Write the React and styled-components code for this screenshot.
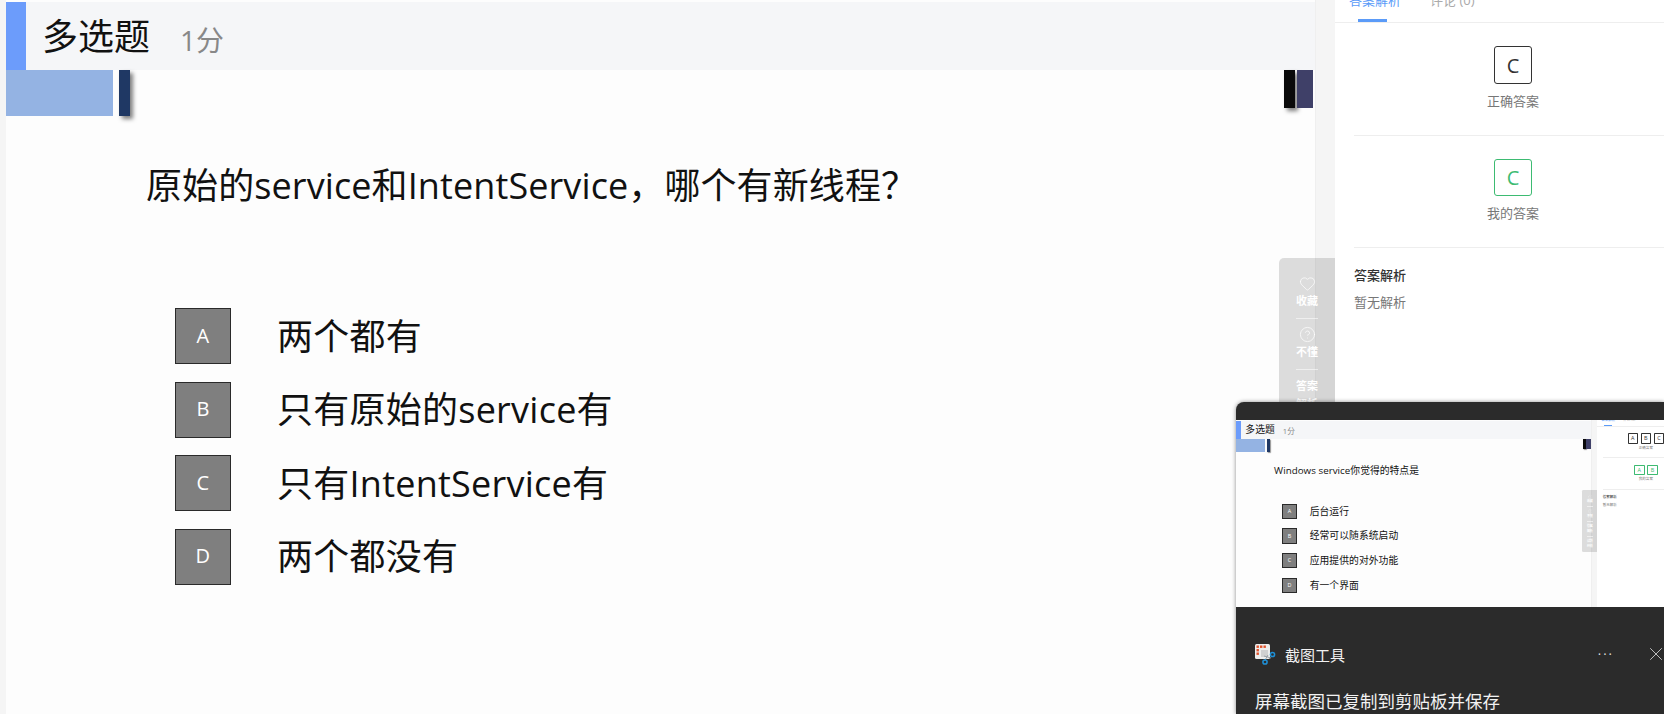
import React from "react";
import styled, { createGlobalStyle } from "styled-components";
import { Heart, CircleHelp, X } from "lucide-react";

const GlobalStyle = createGlobalStyle`
  html, body {
    margin: 0;
    padding: 0;
    overflow: hidden;
    background: #f5f5f5;
    font-family: "Open Sans", "Noto Sans CJK SC", sans-serif;
  }
`;

const Viewport = styled.div`
  position: relative;
  width: 1664px;
  height: 714px;
  overflow: hidden;
`;

const Screen = styled.div`
  position: relative;
  display: flex;
  flex: none;
  width: 1664px;
  height: 714px;
  padding-left: 6px;
  box-sizing: border-box;
  overflow: hidden;
  background: #f5f5f5;
`;

const Slide = styled.main`
  flex: none;
  width: 1310px;
  height: 100%;
  padding-top: 2px;
  box-sizing: border-box;
  background: #fdfdfd;
  border-right: 1px solid #efefef;
`;

const HeaderBar = styled.header`
  display: flex;
  align-items: center;
  height: 68px;
  background: #f5f6f8;
  border-left: 20px solid #6c9cfb;
`;

const Title = styled.h1`
  margin: 0 0 0 16px;
  padding-bottom: 4px;
  font-size: 36px;
  font-weight: 400;
  color: #111;
`;

const Score = styled.span`
  margin-left: 30px;
  padding-top: 6px;
  font-size: 28px;
  color: #888;
`;

const DecorRow = styled.div`
  display: flex;
  justify-content: space-between;
  align-items: flex-start;
  height: 46px;
`;

const DecorGroup = styled.div`
  display: flex;
  gap: ${(props) => props.$gap}px;
  padding-right: ${(props) => props.$pad || 0}px;
`;

const DecorBar = styled.div`
  width: ${(props) => props.$w}px;
  height: ${(props) => props.$h}px;
  background: ${(props) => props.$color};
  box-shadow: ${(props) => (props.$shadow ? "3px 3px 4px rgba(0, 0, 0, 0.5)" : "none")};
`;

const Question = styled.h2`
  margin: 45px 0 0;
  padding-left: 140px;
  font-size: 36px;
  line-height: 50px;
  font-weight: 400;
  letter-spacing: 0.1px;
  color: #111;
`;

const OptionList = styled.ul`
  display: flex;
  flex-direction: column;
  gap: ${(props) => props.$gap}px;
  margin: 97px 0 0;
  padding: 0 0 0 169px;
  list-style: none;
`;

const Option = styled.li`
  display: flex;
  align-items: center;
  gap: 46px;
  height: 56px;
  font-size: 36px;
  letter-spacing: 0.25px;
  color: #111;
`;

const OptionText = styled.span`
  padding-bottom: 4px;
`;

const OptionKey = styled.span`
  display: flex;
  align-items: center;
  justify-content: center;
  width: 56px;
  height: 56px;
  padding-bottom: 2px;
  box-sizing: border-box;
  border: 1px solid #2a2a2a;
  background: #7f7f7f;
  color: #fff;
  font-size: 20px;
`;

const Sidebar = styled.aside`
  flex: none;
  width: 329px;
  margin-left: 19px;
  background: #fff;
`;

const Tabs = styled.nav`
  display: flex;
  gap: 29px;
  height: 40px;
  margin-top: -18px;
  padding-left: 14px;
  border-bottom: 1px solid #eee;
`;

const Tab = styled.span`
  position: relative;
  line-height: 36px;
  font-size: 13px;
  color: ${(props) => (props.$active ? "#5b9bf8" : "#aaa")};

  &::after {
    content: "";
    display: ${(props) => (props.$active ? "block" : "none")};
    position: absolute;
    left: 9px;
    right: 14px;
    bottom: 0;
    height: 3px;
    background: #5b9bf8;
  }
`;

const SideBody = styled.div`
  width: 318px;
  margin-left: 19px;
`;

const AnswerBlock = styled.section`
  display: flex;
  flex-direction: column;
  align-items: center;
  gap: 8px;
  padding: 23px 0 25px;
  border-bottom: 1px solid #eee;
`;

const KeyRow = styled.div`
  display: flex;
  gap: 10px;
`;

const AnswerKey = styled.span`
  display: flex;
  align-items: center;
  justify-content: center;
  width: 38px;
  height: ${(props) => (props.$mine ? 37 : 38)}px;
  box-sizing: border-box;
  border: 1px solid ${(props) => (props.$mine ? "#3dbb72" : "#333")};
  border-radius: 3px;
  color: ${(props) => (props.$mine ? "#3dbb72" : "#333")};
  font-size: 20px;
`;

const AnswerLabel = styled.span`
  font-size: 13px;
  line-height: 18px;
  color: #777;
`;

const AnalysisTitle = styled.h3`
  margin: 17px 0 0;
  font-size: 13px;
  line-height: 20px;
  font-weight: 500;
  color: #333;
`;

const AnalysisText = styled.p`
  margin: 7px 0 0;
  font-size: 13px;
  line-height: 20px;
  color: #777;
`;

const ToolPanel = styled.div`
  position: absolute;
  top: 258px;
  left: 1279px;
  display: flex;
  flex-direction: column;
  align-items: center;
  width: 56px;
  height: 226px;
  padding-top: 17px;
  box-sizing: border-box;
  border-radius: 5px 0 0 5px;
  background: rgba(0, 0, 0, 0.13);
`;

const ToolItem = styled.div`
  display: flex;
  flex-direction: column;
  align-items: center;
  width: 22px;
  padding-bottom: 8px;
  margin-bottom: 7px;
  color: #fff;
  font-size: 11px;
  line-height: 18px;
  font-weight: 700;
  border-bottom: ${(props) => (props.$last ? "none" : "1px solid rgba(255, 255, 255, 0.55)")};
`;

const Toast = styled.div`
  position: absolute;
  top: 402px;
  left: 1236px;
  width: 428px;
  height: 312px;
  overflow: hidden;
  border-radius: 8px 0 0 0;
  background: #2b2b2b;
  box-shadow: 0 0 4px rgba(0, 0, 0, 0.45);
`;

const Thumbnail = styled.div`
  width: 428px;
  height: 187px;
  margin-top: 18px;
  overflow: hidden;
  background: #fff;

  ${Screen} {
    zoom: 0.272;
    margin-left: -6px;
    height: 688px;
  }
`;

const ToastHead = styled.div`
  display: flex;
  align-items: center;
  height: 30px;
  margin-top: 32px;
  padding-left: 19px;
  color: #f2f2f2;
  font-size: 15px;

  svg:last-child {
    margin-right: -3px;
    flex: none;
  }
`;

const AppName = styled.span`
  flex: 1;
  margin-left: 9px;
`;

const MoreDots = styled.span`
  margin-right: 31px;
  letter-spacing: 2px;
  font-size: 13px;
  color: #ddd;
`;

const ToastText = styled.p`
  margin: 19px 0 0 19px;
  font-size: 17.5px;
  line-height: 26px;
  color: #f2f2f2;
  white-space: nowrap;
`;

const SnipIcon = () => (
  <svg width="21" height="21" viewBox="0 0 21 21">
    <rect x="0" y="0" width="15" height="15" rx="1.5" fill="#eceded" />
    <rect x="1.5" y="1.5" width="2.4" height="2.4" fill="#e0512a" />
    <rect x="5" y="1.5" width="2.4" height="2.4" fill="#e0512a" />
    <rect x="8.5" y="1.5" width="2.4" height="2.4" fill="#e0512a" />
    <rect x="1.5" y="5" width="2.4" height="2.4" fill="#e0512a" />
    <rect x="1.5" y="8.5" width="2.4" height="2.4" fill="#e0512a" />
    <rect x="6" y="6" width="7" height="7" fill="#cfd0d1" />
    <path d="M13 11 L9.5 17 M9 12 L16 14" stroke="#9aa0a5" strokeWidth="1" />
    <circle cx="17.5" cy="10.5" r="2.1" fill="none" stroke="#1e8fd6" strokeWidth="1.5" />
    <circle cx="10" cy="18" r="2.1" fill="none" stroke="#1e8fd6" strokeWidth="1.5" />
  </svg>
);

const QuestionScreen = ({ question, options, optionGap, correct, mine, tools }) => (
  <Screen>
    <Slide>
      <HeaderBar>
        <Title>多选题</Title>
        <Score>1分</Score>
      </HeaderBar>
      <DecorRow>
        <DecorGroup $gap={6}>
          <DecorBar $w={107} $h={46} $color="#94b3e3" />
          <DecorBar $w={11} $h={46} $color="#1f3864" $shadow />
        </DecorGroup>
        <DecorGroup $gap={2} $pad={2}>
          <DecorBar $w={11} $h={38} $color="#0a0a0a" $shadow />
          <DecorBar $w={16} $h={38} $color="#3f4068" />
        </DecorGroup>
      </DecorRow>
      <Question>{question}</Question>
      <OptionList $gap={optionGap}>
        {options.map((text, i) => (
          <Option key={text}>
            <OptionKey>{"ABCD"[i]}</OptionKey>
            <OptionText>{text}</OptionText>
          </Option>
        ))}
      </OptionList>
    </Slide>
    <Sidebar>
      <Tabs>
        <Tab $active>答案解析</Tab>
        <Tab>评论 (0)</Tab>
      </Tabs>
      <SideBody>
        <AnswerBlock>
          <KeyRow>
            {correct.map((key) => (
              <AnswerKey key={key}>{key}</AnswerKey>
            ))}
          </KeyRow>
          <AnswerLabel>正确答案</AnswerLabel>
        </AnswerBlock>
        <AnswerBlock>
          <KeyRow>
            {mine.map((key) => (
              <AnswerKey key={key} $mine>
                {key}
              </AnswerKey>
            ))}
          </KeyRow>
          <AnswerLabel>我的答案</AnswerLabel>
        </AnswerBlock>
        <AnalysisTitle>答案解析</AnalysisTitle>
        <AnalysisText>暂无解析</AnalysisText>
      </SideBody>
    </Sidebar>
    <ToolPanel>
      {tools.map((tool, i) => (
        <ToolItem key={tool.lines.join("")} $last={i === tools.length - 1}>
          {tool.icon}
          {tool.lines.map((line) => (
            <span key={line}>{line}</span>
          ))}
        </ToolItem>
      ))}
    </ToolPanel>
  </Screen>
);

const tools = [
  { icon: <Heart size={17} strokeWidth={1} />, lines: ["收藏"] },
  { icon: <CircleHelp size={17} strokeWidth={1} />, lines: ["不懂"] },
  { lines: ["答案", "解析"] },
  { lines: ["试题", "纠错"] },
];

const App = () => (
  <Viewport>
    <GlobalStyle />
    <QuestionScreen
      question="原始的service和IntentService，哪个有新线程？"
      options={["两个都有", "只有原始的service有", "只有IntentService有", "两个都没有"]}
      optionGap={17.6}
      correct={["C"]}
      mine={["C"]}
      tools={tools}
    />
    <Toast>
      <Thumbnail>
        <QuestionScreen
          question="Windows service你觉得的特点是"
          options={["后台运行", "经常可以随系统启动", "应用提供的对外功能", "有一个界面"]}
          optionGap={34.8}
          correct={["A", "B", "C"]}
          mine={["A", "B"]}
          tools={tools}
        />
      </Thumbnail>
      <ToastHead>
        <SnipIcon />
        <AppName>截图工具</AppName>
        <MoreDots>···</MoreDots>
        <X size={22} strokeWidth={0.8} />
      </ToastHead>
      <ToastText>屏幕截图已复制到剪贴板并保存</ToastText>
    </Toast>
  </Viewport>
);

export default App;
